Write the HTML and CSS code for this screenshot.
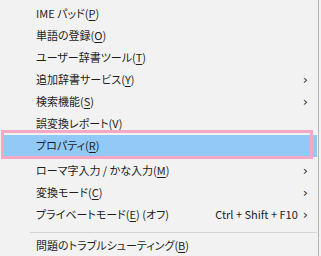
FILE: index.html
```html
<!DOCTYPE html>
<html>
  <head>
    <title>IME Menu</title>
    <link rel="stylesheet" href="styles.css">
  </head>
  <body>
    <div class="menu">
      <div class="item"><span class="label">IME パッド(<u>P</u>)</span></div>
      <div class="item"><span class="label">単語の登録(<u>O</u>)</span></div>
      <div class="item"><span class="label">ユーザー辞書ツール(<u>T</u>)</span></div>
      <div class="item"><span class="label">追加辞書サービス(<u>Y</u>)</span><span class="arrow">&#x203A;</span></div>
      <div class="item"><span class="label">検索機能(<u>S</u>)</span><span class="arrow">&#x203A;</span></div>
      <div class="item"><span class="label">誤変換レポート(<u>V</u>)</span></div>
      <div class="item active"><span class="label">プロパティ(<u>R</u>)</span><div class="mark"></div></div>
      <div class="item"><span class="label">ローマ字入力 / かな入力(<u>M</u>)</span><span class="arrow">&#x203A;</span></div>
      <div class="item"><span class="label">変換モード(<u>C</u>)</span><span class="arrow">&#x203A;</span></div>
      <div class="item"><span class="label">プライベートモード(<u>E</u>) (オフ)</span><span class="key">Ctrl + Shift + F10</span><span class="arrow">&#x203A;</span></div>
      <div class="sep"></div>
      <div class="item"><span class="label">問題のトラブルシューティング(<u>B</u>)</span></div>
    </div>
  </body>
</html>
```

FILE: styles.css
```css
body {
  margin: 0;
  background: #f2f2f2;
  font-family: "Noto Sans CJK JP", "Noto Sans", sans-serif;
  font-size: 11px;
  font-feature-settings: "palt";
  color: #1e1e1e;
}
.menu {
  width: 319px;
  height: 256px;
  padding-top: 3px;
  box-sizing: border-box;
  border-right: 1px solid #b4b4b4;
  background: #f2f2f2;
  overflow: hidden;
}
.item {
  position: relative;
  display: flex;
  align-items: center;
  height: 22px;
  box-sizing: border-box;
  padding: 0 9px 2px 34px;
  margin: 0 1px 0 2px;
}
.label {
  flex: 1;
  white-space: nowrap;
}
.label u {
  text-underline-offset: 2px;
}
.key {
  margin-right: 5px;
}
.arrow {
  font-family: "DejaVu Sans", sans-serif;
  font-size: 13px;
  color: #333;
  line-height: 1;
}
.active {
  background: #91c9f7;
  margin-bottom: 3px;
}
.mark {
  position: absolute;
  left: -1px;
  top: -5px;
  width: 306px;
  height: 23px;
  border: 3px solid #f3a9c6;
}
.sep {
  height: 1px;
  background: #d4d4d4;
  margin: 6px 1px 2px 30px;
}
```
